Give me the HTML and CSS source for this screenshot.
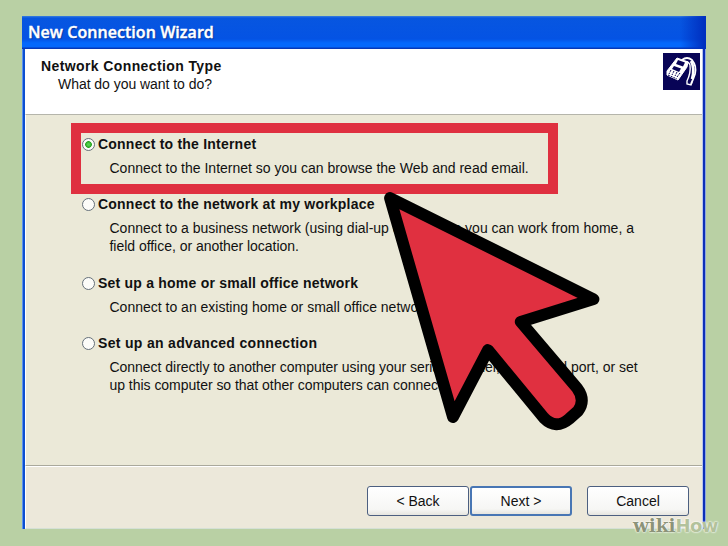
FILE: index.html
```html
<!DOCTYPE html>
<html lang="en">
<head>
<meta charset="utf-8">
<title>New Connection Wizard</title>
<link rel="stylesheet" href="styles.css">
</head>
<body>
<main class="window">
  <header class="titlebar">New Connection Wizard</header>
  <section class="banner">
    <div>
      <h1>Network Connection Type</h1>
      <p>What do you want to do?</p>
    </div>
    <svg class="banner-icon" viewBox="0 0 37 37">
      <rect width="37" height="37" fill="#080456"/>
      <path d="M19 7Q24 3 29 7Q34 13 32 21Q30 27 28 31" fill="none" stroke="#fff" stroke-width="1.8"/>
      <path d="M20 9Q25 7 27 12Q28 20 24 28L24 31L28 32L29 29" fill="none" stroke="#fff" stroke-width="1.4"/>
      <path d="M28 8Q32 15 29 26" fill="none" stroke="#fff" stroke-width="2.6"/>
      <path d="M14 5L25 9L24 14L15 27L4 22L4 18Z" fill="#fff" stroke="#fff" stroke-linejoin="round"/>
      <path d="M15 7L22 9.500L20 13.500L13 11ZM11 13L18 15.500L16 19L9 16Z" fill="#080456"/>
      <path d="M8 17L6 21M11 18L9 22M14 19L12 23M17 20L14 24M5 22L14 26" stroke="#080456" stroke-width="1" stroke-dasharray="2 1"/>
    </svg>
  </section>
  <section class="options">
    <div class="option">
      <span class="radio checked"></span><h2>Connect to the Internet</h2>
      <p>Connect to the Internet so you can browse the Web and read email.</p>
    </div>
    <div class="option workplace">
      <span class="radio"></span><h2>Connect to the network at my workplace</h2>
      <p>Connect to a business network (using dial-up or VPN) so you can work from home, a<br><span class="snug">field office, or another location.</span></p>
    </div>
    <div class="option">
      <span class="radio"></span><h2>Set up a home or small office network</h2>
      <p>Connect to an existing home or small office network.</p>
    </div>
    <div class="option">
      <span class="radio"></span><h2 class="loose">Set up an advanced connection</h2>
      <p class="snug">Connect directly to another computer using your serial, parallel, or infrared port, or set<br>up this computer so that other computers can connect.</p>
    </div>
  </section>
  <footer class="actions">
    <button>&lt; Back</button>
    <button class="default">Next &gt;</button>
    <button class="cancel">Cancel</button>
  </footer>
</main>
<div class="highlight"></div>
<svg class="pointer" viewBox="0 0 728 546">
  <path d="M390 198L593.5 299.2L520.7 321.8L577 388Q586 400 578 411L569 419Q556 430 544 418L488 350L453 417Z" fill="#e03040" stroke="#000" stroke-width="11.8" stroke-linejoin="round"/>
</svg>
<div class="watermark"><b>wiki</b><i>How</i></div>
</body>
</html>
```

FILE: styles.css
```css
* { box-sizing: border-box; }
body {
  margin: 0;
  width: 728px;
  height: 546px;
  padding: 16px 22px 17px;
  overflow: hidden;
  background: #b9d0a4;
  color: #111;
  font: 14px/18px "Liberation Sans", Arial, sans-serif;
}
.window {
  width: 684px;
  height: 513px;
  display: flex;
  flex-direction: column;
  background: linear-gradient(90deg, #5b93ee 0 1px, #0c4fd0 1px 3px, #fff 3px 680px, #b8c4ea 680px 681px, #0b2fb8 681px 683px, #8fa8dc 683px);
}
.titlebar {
  height: 33px;
  padding: 0 6px;
  background: linear-gradient(90deg, transparent 658px, #0030c0 682px), linear-gradient(#3b80dd 0, #0756e0 2px, #0453e4 23px, #0468fc 27px, #0468fc 31px, #0638b8 32px);
  color: #fff;
  font: 600 16px/32px "Open Sans", sans-serif;
  letter-spacing: 0.06px;
  -webkit-text-stroke: 0.4px #fff;
  text-shadow: 1px 1px 1px #06349a;
  white-space: nowrap;
}
.banner {
  height: 65px;
  margin: 0 4px 0 3px;
  padding: 4px 2px 0 16px;
  display: flex;
  justify-content: space-between;
  background: #fff;
}
h1, h2, p { margin: 0; font-size: 14px; line-height: 18px; white-space: nowrap; }
.banner h1 { padding-top: 4px; letter-spacing: 0.39px; }
.banner p { padding-left: 17px; letter-spacing: -0.04px; }
.banner-icon { width: 37px; height: 37px; }
.options {
  height: 351px;
  margin: 0 4px 0 3px;
  padding: 20px 0 0 56px;
  border-top: 1px solid #b5b5ab;
  border-left: 1px solid #fff;
  background: #ebe9d8;
  display: flex;
  flex-direction: column;
  gap: 18px;
}
.option {
  display: grid;
  grid-template-columns: 16px auto;
  row-gap: 6px;
  align-items: center;
}
.workplace { margin-bottom: 1px; }
.option h2 { letter-spacing: 0.22px; }
.option .loose { letter-spacing: 0.32px; }
.option p { grid-column: 2; padding-left: 11.5px; }
.option .snug { letter-spacing: -0.03px; }
.radio {
  width: 13px;
  height: 13px;
  border: 1px solid #65707a;
  border-radius: 50%;
  background: #fcfcf9;
}
.radio.checked { background: radial-gradient(circle, #55d04e 0 1px, #27a521 3px, #fcfcf9 3.7px); }
.actions {
  height: 64px;
  margin: 0 4px 0 3px;
  padding: 20px 13px 0 0;
  border-top: 1px solid #aaa99c;
  border-left: 1px solid #fff;
  border-bottom: 1px solid #d5e0d5;
  box-shadow: inset 0 1px #fff;
  background: #ece8da;
  display: flex;
  justify-content: flex-end;
  gap: 1px;
}
button {
  width: 102px;
  height: 30px;
  padding: 0;
  border: 1px solid #4c5f80;
  border-radius: 3px;
  background: linear-gradient(#fff, #f6f6f4 80%, #e6e5df);
  color: #111;
  font: inherit;
}
.default { border: 2px solid #4876b4; }
.cancel { margin-left: 14px; }
.highlight {
  position: absolute;
  left: 71px;
  top: 123px;
  width: 487px;
  height: 71px;
  border: 10px solid #df3040;
}
.pointer { position: absolute; left: 0; top: 0; width: 728px; height: 546px; }
.watermark {
  position: absolute;
  left: 633px;
  top: 515px;
  font: bold 18.5px/22px "DejaVu Serif", serif;
  letter-spacing: -0.1px;
  color: #8c9379;
  text-shadow: 0 0 2px #fff, 0 0 2px #fff;
}
.watermark i { font: bold 18px/22px "DejaVu Sans", sans-serif; letter-spacing: -0.5px; color: #b3c29c; }
```
